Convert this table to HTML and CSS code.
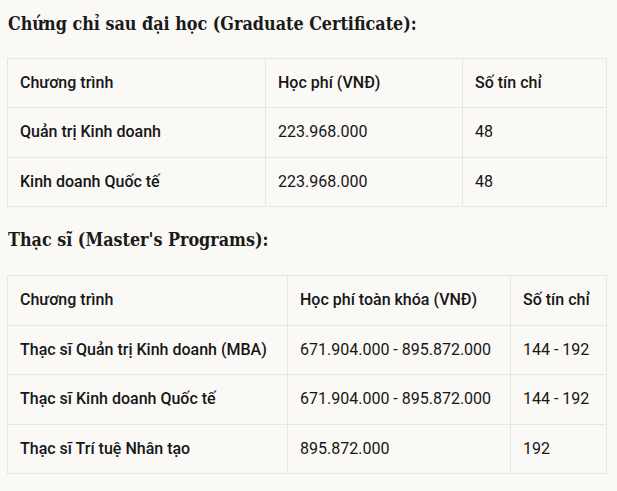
FILE: index.html
```html
<!DOCTYPE html>
<html lang="vi">
<head>
<meta charset="utf-8">
<link rel="stylesheet" href="styles.css">
</head>
<body>
<h3 class="heading">Chứng chỉ sau đại học (Graduate Certificate):</h3>
<table class="fees fees-cert">
  <thead>
    <tr><th>Chương trình</th><th>Học phí (VNĐ)</th><th>Số tín chỉ</th></tr>
  </thead>
  <tbody>
    <tr><td class="name">Quản trị Kinh doanh</td><td>223.968.000</td><td>48</td></tr>
    <tr><td class="name">Kinh doanh Quốc tế</td><td>223.968.000</td><td>48</td></tr>
  </tbody>
</table>
<h3 class="heading heading-second">Thạc sĩ (Master's Programs):</h3>
<table class="fees fees-master">
  <thead>
    <tr><th>Chương trình</th><th>Học phí toàn khóa (VNĐ)</th><th>Số tín chỉ</th></tr>
  </thead>
  <tbody>
    <tr><td class="name">Thạc sĩ Quản trị Kinh doanh (MBA)</td><td>671.904.000 - 895.872.000</td><td>144 - 192</td></tr>
    <tr><td class="name">Thạc sĩ Kinh doanh Quốc tế</td><td>671.904.000 - 895.872.000</td><td>144 - 192</td></tr>
    <tr><td class="name">Thạc sĩ Trí tuệ Nhân tạo</td><td>895.872.000</td><td>192</td></tr>
  </tbody>
</table>
</body>
</html>
```
FILE: styles.css
```css
html, body {
  margin: 0;
  padding: 0;
  background: #faf9f6;
}
body {
  padding: 0 10px 0 7px;
  color: #161616;
  font-family: Roboto, "Noto Sans", sans-serif;
}
.heading {
  font-family: "DejaVu Serif Condensed", "DejaVu Serif", serif;
  font-stretch: condensed;
  font-weight: bold;
  font-size: 17.8px;
  line-height: 24px;
  margin: 11.8px 0 22.2px 1px;
  color: #1a1a1a;
}
.heading-second {
  margin-top: 20.8px;
  margin-bottom: 23.2px;
}
.fees {
  width: 600px;
  border-collapse: collapse;
  font-size: 16px;
  line-height: 24.5px;
}
.fees th, .fees td {
  border: 1px solid #e8e6e2;
  padding: 12px 12px;
  text-align: left;
  vertical-align: middle;
}
.fees th { font-weight: 500; }
.fees td { font-weight: 400; }
.fees td.name { font-weight: 500; }
.fees-cert th:nth-child(1) { width: 233px; }
.fees-cert th:nth-child(2) { width: 172px; }
.fees-master th:nth-child(1) { width: 255px; }
.fees-master th:nth-child(2) { width: 198px; }
```
